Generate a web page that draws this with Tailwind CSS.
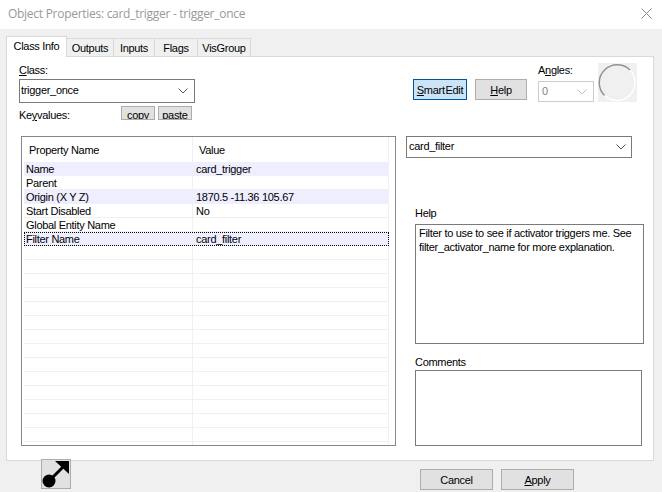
<!DOCTYPE html>
<html lang="en">
<head>
  <meta charset="UTF-8" />
  <title>Object Properties</title>
  <script src="https://cdn.jsdelivr.net/npm/@tailwindcss/browser@4"></script>
</head>
<body class="m-0 bg-[#f0f0f0]">
<div class="w-[662px] h-[492px] overflow-hidden bg-[#f0f0f0] flex flex-col text-[11px] leading-[14px] tracking-[-0.3px] text-black font-['Liberation_Sans',sans-serif]">

  <!-- title bar -->
  <div class="h-[29px] shrink-0 bg-white flex items-center justify-between pl-[8px] pr-[10px]">
    <span class="text-[12px] tracking-[-0.28px] text-[#999999] font-['Open_Sans',sans-serif] -mt-[2px]">Object Properties: card_trigger - trigger_once</span>
    <svg width="11" height="11" viewBox="0 0 11 11" class="-mt-[3px]"><path d="M0.5 0.5 L10.5 10.5 M10.5 0.5 L0.5 10.5" stroke="#8a8a8a" stroke-width="1" fill="none"/></svg>
  </div>

  <!-- tabs -->
  <div class="h-[20px] mt-[7px] ml-[6px] shrink-0 flex items-end relative z-10">
    <div class="w-[61px] h-[21px] -mb-px bg-white border border-b-0 border-[#d9d9d9] text-center pt-[2px]">Class Info</div>
    <div class="w-[47px] h-[18px] border border-l-0 border-b-0 border-[#d9d9d9] text-center pt-[2px]">Outputs</div>
    <div class="w-[41px] h-[18px] border border-l-0 border-b-0 border-[#d9d9d9] text-center pt-[2px]">Inputs</div>
    <div class="w-[43px] h-[18px] border border-l-0 border-b-0 border-[#d9d9d9] text-center pt-[2px]">Flags</div>
    <div class="w-[53px] h-[18px] border border-l-0 border-b-0 border-[#d9d9d9] text-center pt-[2px]">VisGroup</div>
  </div>

  <!-- panel -->
  <div class="ml-[6px] w-[648px] h-[405px] shrink-0 bg-white border border-[#d9d9d9] flex flex-col">

    <!-- top controls -->
    <div class="h-[79px] shrink-0 flex pt-[6px] pl-[12px]">
      <div class="w-[176px] shrink-0">
        <div class="h-[16px]"><u>C</u>lass:</div>
        <div class="h-[24px] border border-[#7a7a7a] flex items-center justify-between pl-[1px] pr-[6px] mb-[3px]">
          <span class="-mt-[2px]">trigger_once</span>
          <svg width="10" height="6" viewBox="0 0 10 6"><path d="M0.5 0.5 L5 5 L9.5 0.5" stroke="#555555" fill="none"/></svg>
        </div>
        <div class="flex items-start">
          <span class="w-[102px] pt-[2px]">Ke<u>y</u>values:</span>
          <div class="w-[34px] h-[14px] mr-[3px] overflow-hidden bg-[#e1e1e1] border border-[#adadad] text-center leading-[17px]">copy</div>
          <div class="w-[34px] h-[14px] overflow-hidden bg-[#e1e1e1] border border-[#adadad] text-center leading-[17px]">paste</div>
        </div>
      </div>

      <div class="ml-[218px] mt-[16px] flex items-start">
        <div class="w-[54px] h-[21px] bg-[#cce4f7] border border-[#005499] flex items-center justify-center"><span class="[word-spacing:-2px]"><u>S</u>mart Edit</span></div>
        <div class="w-[52px] h-[21px] ml-[8px] bg-[#e1e1e1] border border-[#adadad] flex items-center justify-center"><span><u>H</u>elp</span></div>
      </div>

      <div class="ml-[11px] w-[56px]">
        <div class="h-[18px]">A<u>n</u>gles:</div>
        <div class="h-[21px] border border-[#cccccc] flex items-center justify-between pl-[3px] pr-[6px] text-[#838383]">
          <span class="-mt-[2px]">0</span>
          <svg width="10" height="6" viewBox="0 0 10 6"><path d="M0.5 0.5 L5 5 L9.5 0.5" stroke="#bfbfbf" fill="none"/></svg>
        </div>
      </div>

      <svg width="39" height="39" viewBox="0 0 39 39" class="ml-[4px] bg-[#f0f0f0]">
        <circle cx="19" cy="19.5" r="18" fill="none" stroke="#ffffff" stroke-width="1.5"/>
        <path d="M6.5 32.5 A18 18 0 0 1 32 7" fill="none" stroke="#909090" stroke-width="1.5"/>
        <rect x="19" y="19" width="1" height="1" fill="#ffffff"/>
      </svg>
    </div>

    <!-- table + right column -->
    <div class="flex pl-[14px]">
      <div class="w-[375px] h-[310px] shrink-0 border border-[#828790] overflow-hidden">
        <div class="h-[25px] pl-[2px] grid grid-cols-[169px_196px]">
          <div class="border-r border-[#f0f0f0] pl-[5px] pt-[6px]">Property Name</div>
          <div class="border-r border-[#f0f0f0] pl-[6px] pt-[6px]">Value</div>
        </div>
        <div class="ml-[2px] w-[365px]">
          <div class="grid grid-cols-[169px_196px] h-[14px] bg-[#eeeeff]"><div class="border-r border-[#f0f0f0] pl-[2px]">Name</div><div class="border-r border-[#f0f0f0] pl-[3px]">card_trigger</div></div>
          <div class="grid grid-cols-[169px_196px] h-[14px] border-b border-[#f0f0f0]"><div class="border-r border-[#f0f0f0] pl-[2px]">Parent</div><div class="border-r border-[#f0f0f0] pl-[3px]"></div></div>
          <div class="grid grid-cols-[169px_196px] h-[14px] bg-[#eeeeff]"><div class="border-r border-[#f0f0f0] pl-[2px]">Origin (X Y Z)</div><div class="border-r border-[#f0f0f0] pl-[3px]">1870.5 -11.36 105.67</div></div>
          <div class="grid grid-cols-[169px_196px] h-[14px] border-b border-[#f0f0f0]"><div class="border-r border-[#f0f0f0] pl-[2px]">Start Disabled</div><div class="border-r border-[#f0f0f0] pl-[3px]">No</div></div>
          <div class="grid grid-cols-[169px_196px] h-[14px] border-b border-[#f0f0f0]"><div class="border-r border-[#f0f0f0] pl-[2px]">Global Entity Name</div><div class="border-r border-[#f0f0f0] pl-[3px]"></div></div>
          <div class="grid grid-cols-[169px_196px] h-[14px] bg-[#eeeeff] outline outline-1 outline-dotted outline-black -outline-offset-1"><div class="border-r border-[#f0f0f0] pl-[2px]">Filter Name</div><div class="pl-[3px]">card_filter</div></div>
          <div class="grid grid-cols-[169px_196px] h-[14px] border-b border-[#f0f0f0]"><div class="border-r border-[#f0f0f0]"></div><div class="border-r border-[#f0f0f0]"></div></div>
          <div class="grid grid-cols-[169px_196px] h-[14px] border-b border-[#f0f0f0]"><div class="border-r border-[#f0f0f0]"></div><div class="border-r border-[#f0f0f0]"></div></div>
          <div class="grid grid-cols-[169px_196px] h-[14px] border-b border-[#f0f0f0]"><div class="border-r border-[#f0f0f0]"></div><div class="border-r border-[#f0f0f0]"></div></div>
          <div class="grid grid-cols-[169px_196px] h-[14px] border-b border-[#f0f0f0]"><div class="border-r border-[#f0f0f0]"></div><div class="border-r border-[#f0f0f0]"></div></div>
          <div class="grid grid-cols-[169px_196px] h-[14px] border-b border-[#f0f0f0]"><div class="border-r border-[#f0f0f0]"></div><div class="border-r border-[#f0f0f0]"></div></div>
          <div class="grid grid-cols-[169px_196px] h-[14px] border-b border-[#f0f0f0]"><div class="border-r border-[#f0f0f0]"></div><div class="border-r border-[#f0f0f0]"></div></div>
          <div class="grid grid-cols-[169px_196px] h-[14px] border-b border-[#f0f0f0]"><div class="border-r border-[#f0f0f0]"></div><div class="border-r border-[#f0f0f0]"></div></div>
          <div class="grid grid-cols-[169px_196px] h-[14px] border-b border-[#f0f0f0]"><div class="border-r border-[#f0f0f0]"></div><div class="border-r border-[#f0f0f0]"></div></div>
          <div class="grid grid-cols-[169px_196px] h-[14px] border-b border-[#f0f0f0]"><div class="border-r border-[#f0f0f0]"></div><div class="border-r border-[#f0f0f0]"></div></div>
          <div class="grid grid-cols-[169px_196px] h-[14px] border-b border-[#f0f0f0]"><div class="border-r border-[#f0f0f0]"></div><div class="border-r border-[#f0f0f0]"></div></div>
          <div class="grid grid-cols-[169px_196px] h-[14px] border-b border-[#f0f0f0]"><div class="border-r border-[#f0f0f0]"></div><div class="border-r border-[#f0f0f0]"></div></div>
          <div class="grid grid-cols-[169px_196px] h-[14px] border-b border-[#f0f0f0]"><div class="border-r border-[#f0f0f0]"></div><div class="border-r border-[#f0f0f0]"></div></div>
          <div class="grid grid-cols-[169px_196px] h-[14px] border-b border-[#f0f0f0]"><div class="border-r border-[#f0f0f0]"></div><div class="border-r border-[#f0f0f0]"></div></div>
          <div class="grid grid-cols-[169px_196px] h-[14px] border-b border-[#f0f0f0]"><div class="border-r border-[#f0f0f0]"></div><div class="border-r border-[#f0f0f0]"></div></div>
          <div class="grid grid-cols-[169px_196px] h-[14px]"><div class="border-r border-[#f0f0f0]"></div><div class="border-r border-[#f0f0f0]"></div></div>
        </div>
      </div>

      <div class="ml-[10px] w-[238px] flex flex-col">
        <div class="w-[226px] h-[22px] border border-[#7a7a7a] flex items-center justify-between pl-[2px] pr-[5px]">
          <span class="-mt-[2px]">card_filter</span>
          <svg width="10" height="6" viewBox="0 0 10 6"><path d="M0.5 0.5 L5 5 L9.5 0.5" stroke="#555555" fill="none"/></svg>
        </div>
        <div class="mt-[48px] ml-[9px] h-[18px]">Help</div>
        <div class="ml-[9px] w-[229px] h-[120px] border border-[#7a7a7a] px-[3px] pt-[1px] whitespace-nowrap">Filter to use to see if activator triggers me. See<br>filter_activator_name for more explanation.</div>
        <div class="mt-[11px] ml-[9px] h-[15px]">Comments</div>
        <div class="ml-[9px] w-[227px] h-[76px] border border-[#7a7a7a]"></div>
      </div>
    </div>
  </div>

  <!-- bottom row -->
  <div class="-mt-[2px] pl-[41px] flex items-start relative z-10">
    <div class="w-[30px] h-[30px] bg-[#e1e1e1] border border-[#adadad]">
      <svg width="28" height="28" viewBox="0 0 28 28">
        <circle cx="7" cy="21" r="6.5" fill="#000000"/>
        <path d="M9 19 L21 7" stroke="#000000" stroke-width="3" fill="none"/>
        <path d="M13 1 L27 1 L27 14 Z" fill="#000000"/>
      </svg>
    </div>
    <div class="mt-[10px] ml-[349px] w-[73px] h-[21px] bg-[#e1e1e1] border border-[#adadad] flex items-center justify-center">Cancel</div>
    <div class="mt-[10px] ml-[8px] w-[73px] h-[21px] bg-[#e1e1e1] border border-[#adadad] flex items-center justify-center"><span><u>A</u>pply</span></div>
  </div>
</div>
</body>
</html>
